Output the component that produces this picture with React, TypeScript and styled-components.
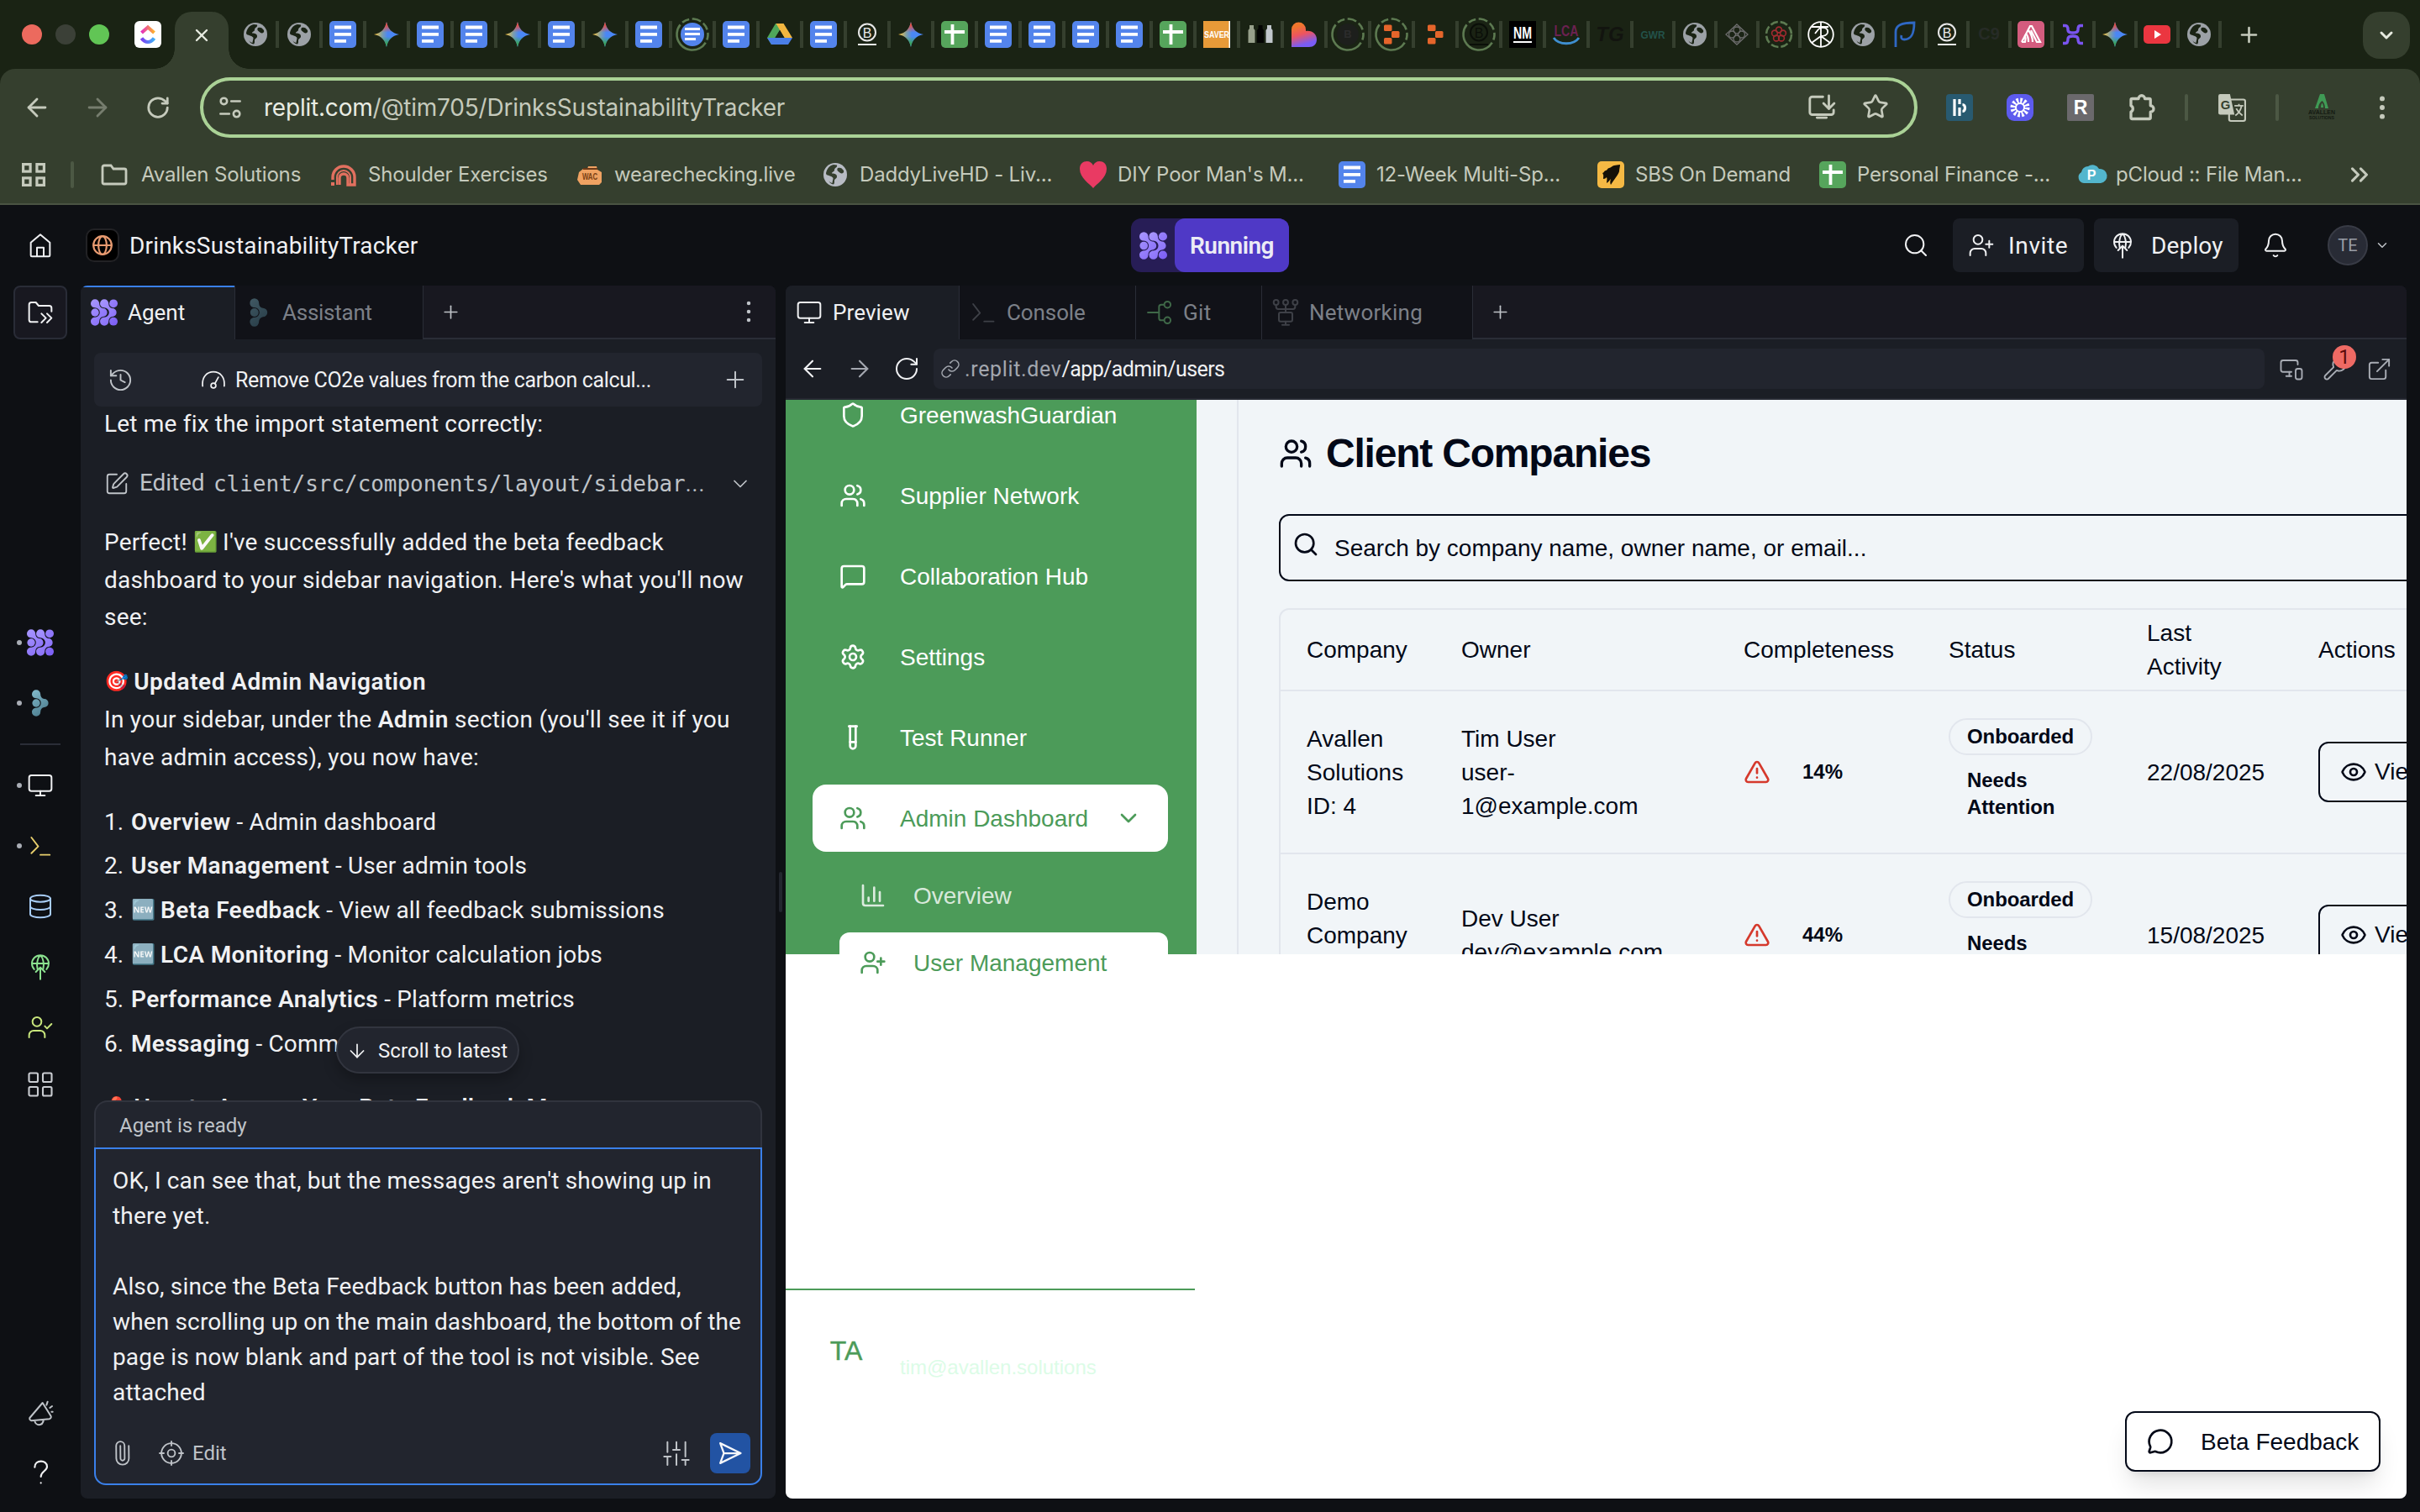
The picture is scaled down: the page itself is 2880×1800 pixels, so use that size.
import React from "react";
import styled, { createGlobalStyle, css } from "styled-components";
import {
  ArrowDown, ArrowLeft, ArrowRight, Bell, ChartColumn, ChevronDown, ChevronsRight, Database, Eye,
  ExternalLink, History, LayoutGrid, Link, MessageCircle, MessageSquare, Monitor, MonitorSmartphone,
  Paperclip, Plus, RotateCw, Search, Settings, Shield, SquarePen, Star, TestTube, TriangleAlert,
  UserCheck, UserPlus, Users, Wrench, X,
} from "lucide-react";

const c = {
  strip: "#1a2314",
  chrome: "#353f2e",
  chromeText: "#c5cabc",
  lime: "#aad296",
  root: "#0e1014",
  panel: "#1b1e25",
  tabs: "#181820",
  tabIdle: "#111218",
  card: "#22252e",
  line: "#2a2d37",
  text: "#f0f1f3",
  dim: "#bfc3c8",
  blue: "#3a80ea",
  green: "#4c9b59",
  ink: "#020817",
  page: "#f1f5f8",
  pageLine: "#e2e6ed",
};

const Global = createGlobalStyle`
  * { box-sizing: border-box; }
  body { margin: 0; background: ${c.root}; }
  svg { display: block; flex: none; overflow: visible; }
`;

const Screen = styled.div`
  width: 2880px;
  height: 1800px;
  display: flex;
  flex-direction: column;
  overflow: hidden;
  background: ${c.root};
  font-family: Roboto, "Noto Sans", sans-serif;
`;

/* ---------- browser chrome ---------- */

const TabStrip = styled.div`
  height: 82px;
  flex: none;
  display: flex;
  align-items: center;
  padding-left: 26px;
  background: ${c.strip};
`;
const Lights = styled.div`
  display: flex;
  gap: 16px;
  margin-right: 30px;
`;
const Light = styled.span<{ $tone: string }>`
  width: 24px;
  height: 24px;
  border-radius: 50%;
  background: ${(p) => p.$tone};
`;
const ActiveTab = styled.div`
  position: relative;
  width: 64px;
  height: 68px;
  margin: 14px 8px 0 16px;
  border-radius: 20px 20px 0 0;
  background: ${c.chrome};
  color: #e6eadf;
  display: flex;
  align-items: center;
  justify-content: center;
  padding-bottom: 12px;
  &::before, &::after {
    content: "";
    position: absolute;
    bottom: 0;
    width: 24px;
    height: 24px;
  }
  &::before { left: -24px; background: radial-gradient(circle at 0 0, transparent 23.5px, ${c.chrome} 24px); }
  &::after { right: -24px; background: radial-gradient(circle at 100% 0, transparent 23.5px, ${c.chrome} 24px); }
`;
const FavTab = styled.div<{ $narrow: boolean }>`
  width: ${(p) => (p.$narrow ? 50 : 52)}px;
  height: 32px;
  flex: none;
  display: flex;
  align-items: center;
  justify-content: center;
  border-right: 4px solid ${c.chrome};
  position: relative;
  z-index: 1;
`;
const NewTab = styled.div`
  margin-left: 18px;
  color: ${c.chromeText};
`;
const TabMenu = styled.div`
  width: 56px;
  height: 56px;
  margin: 2px 12px 0 auto;
  border-radius: 20px;
  background: ${c.chrome};
  color: #e6eadf;
  display: flex;
  align-items: center;
  justify-content: center;
`;
const ChromeBody = styled.div`
  flex: none;
  background: ${c.strip};
`;
const ChromePanel = styled.div`
  height: 162px;
  border-radius: 18px 18px 0 0;
  border-bottom: 2px solid #4a5443;
  background: ${c.chrome};
  color: ${c.chromeText};
`;
const Toolbar = styled.div`
  height: 92px;
  display: flex;
  align-items: center;
  padding: 0 8px;
`;
const ToolCell = styled.div<{ $dim?: boolean; $gap?: number }>`
  width: 72px;
  margin-left: ${(p) => p.$gap ?? 0}px;
  display: flex;
  justify-content: center;
  opacity: ${(p) => (p.$dim ? 0.45 : 1)};
`;
const ToolSep = styled.span`
  width: 4px;
  height: 32px;
  margin-left: 16px;
  border-radius: 2px;
  background: #4c5844;
`;
const Address = styled.div`
  width: 2044px;
  height: 72px;
  margin: 0 0 0 14px;
  padding: 0 30px 0 18px;
  border: 4px solid ${c.lime};
  border-radius: 36px;
  display: flex;
  align-items: center;
`;
const Url = styled.div`
  flex: 1;
  margin-left: 26px;
  font: 400 28px/40px Inter, sans-serif;
  letter-spacing: -0.21px;
  color: ${c.chromeText};
  b { font-weight: 400; color: #e9ece3; }
`;
const AddressIcons = styled.div`
  display: flex;
  gap: 31px;
`;
const Bookmarks = styled.div`
  height: 68px;
  display: flex;
  align-items: center;
  padding-left: 24px;
`;
const BookSep = styled.span`
  width: 4px;
  height: 32px;
  margin: 0 32px 0 28px;
  border-radius: 2px;
  background: #4c5844;
`;
const Bookmark = styled.div<{ $w: number; $gap: number }>`
  width: ${(p) => p.$w}px;
  flex: none;
  display: flex;
  align-items: center;
  gap: ${(p) => p.$gap}px;
  font: 400 24px/32px Inter, sans-serif;
  letter-spacing: -0.17px;
  white-space: nowrap;
`;

/* ---------- workspace header ---------- */

const Header = styled.header`
  height: 96px;
  flex: none;
  display: flex;
  align-items: center;
  padding-right: 36px;
  color: ${c.text};
`;
const ProjectGroup = styled.div`
  width: 1346px;
  display: flex;
  align-items: center;
  padding-left: 32px;
`;
const AppBadge = styled.div`
  width: 40px;
  height: 40px;
  margin: 0 12px 0 38px;
  border: 2px solid #222225;
  border-radius: 10px;
  background: #000;
  color: #e79a70;
  display: flex;
  align-items: center;
  justify-content: center;
`;
const ProjectName = styled.div`
  font-size: 28px;
  font-weight: 400;
  letter-spacing: 0.18px;
`;
const RunPill = styled.div`
  width: 188px;
  height: 64px;
  border-radius: 12px;
  background: #271d56;
  display: flex;
  align-items: center;
  padding-left: 10px;
  gap: 9px;
`;
const RunLabel = styled.div`
  flex: 1;
  height: 64px;
  border-radius: 12px;
  background: #4f39c6;
  font-size: 28px;
  font-weight: 600;
  letter-spacing: -0.5px;
  color: #ecebf5;
  display: flex;
  align-items: center;
  justify-content: center;
`;
const Actions = styled.div`
  flex: 1;
  display: flex;
  align-items: center;
  justify-content: flex-end;
`;
const ActionButton = styled.button<{ $w: number; $gap: number; $ml: number; $ls: number }>`
  width: ${(p) => p.$w}px;
  height: 64px;
  margin: 0 0 0 ${(p) => p.$ml}px;
  padding: 0 0 0 18px;
  border: 0;
  border-radius: 8px;
  background: ${c.panel};
  color: ${c.text};
  font: 400 28px Roboto, sans-serif;
  letter-spacing: ${(p) => p.$ls}px;
  display: flex;
  align-items: center;
  gap: ${(p) => p.$gap}px;
`;
const BellSlot = styled.div`
  margin: 0 46px 0 28px;
`;
const Avatar = styled.div`
  width: 48px;
  height: 48px;
  margin-right: 8px;
  border: 2px solid #383b45;
  border-radius: 50%;
  background: #282b35;
  color: #9a9ea7;
  font-size: 20px;
  display: flex;
  align-items: center;
  justify-content: center;
`;

/* ---------- rail ---------- */

const Workspace = styled.div`
  flex: 1;
  display: flex;
  padding: 0 16px 16px 0;
  min-height: 0;
`;
const Rail = styled.nav`
  width: 96px;
  flex: none;
  display: flex;
  flex-direction: column;
  align-items: center;
  padding-bottom: 8px;
`;
const FolderButton = styled.div`
  width: 64px;
  height: 64px;
  margin-bottom: 337px;
  border: 2px solid #292c37;
  border-radius: 8px;
  background: ${c.tabs};
  color: ${c.text};
  display: flex;
  align-items: center;
  justify-content: center;
`;
const RailItem = styled.div<{ $tone?: string; $dot?: boolean; $after?: number }>`
  position: relative;
  width: 96px;
  height: 48px;
  margin-bottom: ${(p) => p.$after ?? 24}px;
  color: ${(p) => p.$tone ?? c.text};
  display: flex;
  align-items: center;
  justify-content: center;
  ${(p) => p.$dot && css`
    &::before {
      content: "";
      position: absolute;
      left: 20px;
      top: 21px;
      width: 6px;
      height: 6px;
      border-radius: 50%;
      background: #a9adb5;
    }
  `}
`;
const RailRule = styled.hr`
  width: 48px;
  height: 2px;
  margin: 0 0 24px;
  border: 0;
  background: ${c.line};
`;
const RailFoot = styled.div`
  margin-top: auto;
  display: flex;
  flex-direction: column;
  gap: 22px;
`;

/* ---------- panes ---------- */

const Pane = styled.section<{ $w: number }>`
  width: ${(p) => p.$w}px;
  flex: none;
  display: flex;
  flex-direction: column;
  border-radius: 8px;
  overflow: hidden;
  background: ${c.panel};
`;
const Divider = styled.div`
  width: 12px;
  flex: none;
  display: flex;
  align-items: center;
  justify-content: center;
  &::after {
    content: "";
    width: 4px;
    height: 48px;
    border-radius: 2px;
    background: #23262e;
  }
`;
const PaneTabs = styled.div`
  height: 64px;
  flex: none;
  display: flex;
  background: ${c.tabs};
`;
const PaneTab = styled.div<{ $w: number; $active?: boolean; $accent?: boolean; $ls?: number }>`
  width: ${(p) => p.$w}px;
  padding-left: 12px;
  display: flex;
  align-items: center;
  gap: 12px;
  font-size: 26px;
  letter-spacing: ${(p) => p.$ls ?? 0}px;
  color: ${(p) => (p.$active ? c.text : "#7c8088")};
  background: ${(p) => (p.$active ? c.panel : c.tabIdle)};
  border-right: 1px solid ${c.line};
  box-shadow: ${(p) => (p.$accent ? `inset 0 2px 0 ${c.blue}` : "none")};
`;
const TabIcon = styled.span<{ $fade?: boolean }>`
  width: 32px;
  display: flex;
  justify-content: center;
  opacity: ${(p) => (p.$fade ? 0.42 : 1)};
`;
const TabsRest = styled.div`
  flex: 1;
  display: flex;
  align-items: center;
  justify-content: space-between;
  padding: 0 16px 0 20px;
  border-bottom: 2px solid ${c.line};
  color: ${c.dim};
`;

/* ---------- agent pane ---------- */

const AgentBody = styled.div`
  flex: 1;
  min-height: 0;
  position: relative;
  display: flex;
  flex-direction: column;
  padding: 16px 16px 16px;
`;
const ThreadBar = styled.div`
  height: 64px;
  flex: none;
  padding: 0 16px;
  border-radius: 8px;
  background: ${c.card};
  color: ${c.dim};
  display: flex;
  align-items: center;
  justify-content: space-between;
`;
const ThreadTitle = styled.div`
  display: flex;
  align-items: center;
  gap: 12px;
  margin-right: 3px;
  font-size: 25px;
  letter-spacing: -0.35px;
  color: ${c.text};
`;
const Messages = styled.div`
  height: 827px;
  flex: none;
  margin-top: -1px;
  padding: 0 12px;
  overflow: hidden;
  display: flex;
  flex-direction: column;
  gap: 32px;
  color: ${c.text};
  font-size: 28px;
  line-height: 44.8px;
  letter-spacing: 0.18px;
  white-space: nowrap;
`;
const Paragraph = styled.p<{ $ls?: number }>`
  margin: 0;
  letter-spacing: ${(p) => p.$ls ?? 0.19}px;
  b { letter-spacing: 0.5px; font-weight: 600; }
`;
const EditedRow = styled.div`
  height: 32px;
  flex: none;
  display: flex;
  align-items: center;
  color: ${c.dim};
  font-size: 28px;
`;
const EditedLabel = styled.span`
  margin: 0 0 0 12px;
  width: 88px;
  letter-spacing: -0.1px;
`;
const FilePath = styled.code`
  font: 400 26px/32px "DejaVu Sans Mono", "Liberation Mono", monospace;
  letter-spacing: -0.05px;
  margin-right: auto;
  i { font: 400 26px Roboto, sans-serif; letter-spacing: 1px; }
`;
const Steps = styled.ol`
  margin: 0;
  padding: 0 0 0 32px;
  display: flex;
  flex-direction: column;
  gap: 8px;
  letter-spacing: 0.14px;
  b { letter-spacing: 0.36px; font-weight: 600; }
`;
const Step = styled.li`
  list-style: none;
  height: 44.8px;
`;
const StepNo = styled.span`
  display: inline-block;
  width: 32px;
  margin-left: -32px;
  letter-spacing: 0;
`;
const Emoji = styled.span`
  display: inline-block;
  width: 28px;
  height: 28px;
  font: 23.5px/28px "Noto Color Emoji", sans-serif;
  letter-spacing: 0;
  vertical-align: 2px;
`;
const ScrollPill = styled.div`
  position: absolute;
  left: 304px;
  top: 818px;
  z-index: 2;
  width: 218px;
  height: 56px;
  border: 2px solid #32353f;
  border-radius: 28px;
  background: ${c.card};
  box-shadow: 0 8px 16px rgba(0, 0, 0, 0.25);
  color: ${c.text};
  font-size: 24px;
  letter-spacing: 0.08px;
  display: flex;
  align-items: center;
  padding: 1px 0 0 10px;
  gap: 12px;
`;
const Status = styled.div`
  height: 56px;
  flex: none;
  padding: 2px 28px 0;
  border: 2px solid #31343e;
  border-bottom: 0;
  border-radius: 16px 16px 0 0;
  background: ${c.card};
  color: ${c.dim};
  font-size: 24px;
  display: flex;
  align-items: center;
`;
const Composer = styled.div`
  height: 402px;
  flex: none;
  padding: 17px 12px 12px;
  border: 2px solid ${c.blue};
  border-radius: 0 0 14px 14px;
  background: ${c.card};
  display: flex;
  flex-direction: column;
  justify-content: space-between;
`;
const Draft = styled.div`
  padding-left: 8px;
  color: ${c.text};
  font-size: 28px;
  line-height: 42px;
  letter-spacing: 0.15px;
  white-space: pre;
`;
const ComposerBar = styled.div`
  height: 48px;
  display: flex;
  align-items: center;
  padding-left: 4px;
  color: ${c.dim};
  font-size: 24px;
`;
const EditMode = styled.div`
  margin: 0 auto 0 29px;
  display: flex;
  align-items: center;
  gap: 10px;
`;
const SendButton = styled.div`
  width: 48px;
  height: 48px;
  margin-left: 24px;
  border-radius: 8px;
  background: #2253a3;
  color: #f4f6fa;
  display: flex;
  align-items: center;
  justify-content: center;
`;

/* ---------- preview pane ---------- */

const PreviewBar = styled.div`
  height: 72px;
  flex: none;
  padding: 0 17px 0 16px;
  border-bottom: 2px solid #262932;
  color: ${c.text};
  display: flex;
  align-items: center;
`;
const NavIcons = styled.div`
  width: 160px;
  display: flex;
  gap: 24px;
  align-items: center;
`;
const PreviewUrl = styled.div`
  width: 1584px;
  height: 48px;
  padding-left: 8px;
  border-radius: 8px;
  background: ${c.card};
  display: flex;
  align-items: center;
  gap: 5px;
  font-size: 25px;
  letter-spacing: -0.6px;
  color: ${c.text};
`;
const Host = styled.span`
  color: #a3a7af;
  letter-spacing: 0.65px;
  margin-right: -5px;
`;
const PreviewTools = styled.div`
  flex: 1;
  display: flex;
  align-items: center;
  justify-content: flex-end;
  gap: 22px;
  color: #a9adb5;
`;
const WrenchSlot = styled.div`
  position: relative;
`;
const Count = styled.span`
  position: absolute;
  left: 12px;
  top: -13px;
  width: 28px;
  height: 28px;
  border-radius: 50%;
  background: #ee6a64;
  color: #5c0b0b;
  font-size: 24px;
  line-height: 29px;
  text-align: center;
`;
const SitePage = styled.div`
  flex: 1;
  position: relative;
  overflow: hidden;
  background: #fff;
  font-family: "Liberation Sans", Arial, sans-serif;
  font-size: 28px;
  line-height: 40px;
  color: ${c.ink};
`;
const Shell = styled.div`
  height: 660px;
  display: flex;
`;
const Side = styled.aside`
  width: 489px;
  height: 660px;
  flex: none;
  background: ${c.green};
  color: #fff;
  white-space: nowrap;
`;
const SideInner = styled.div`
  height: 1308px;
  width: 487px;
  display: flex;
  flex-direction: column;
`;
const SideNav = styled.div`
  margin-top: -22px;
  padding: 0 32px;
  display: flex;
  flex-direction: column;
  gap: 16px;
`;
const Label = styled.span`
  padding-top: 2px;
`;
const SideLink = styled.div<{ $on?: boolean }>`
  height: 80px;
  padding: 0 32px;
  border-radius: 16px;
  display: flex;
  align-items: center;
  gap: 40px;
  background: ${(p) => (p.$on ? "#fff" : "transparent")};
  color: ${(p) => (p.$on ? c.green : "#fff")};
`;
const Caret = styled.span`
  margin: 0 0 0 -8px;
`;
const SubNav = styled.div`
  margin-left: 32px;
  display: flex;
  flex-direction: column;
  gap: 8px;
`;
const SubLink = styled.div<{ $on?: boolean }>`
  height: 72px;
  padding: 0 24px;
  border-radius: 12px;
  display: flex;
  align-items: center;
  gap: 32px;
  background: ${(p) => (p.$on ? "#fff" : "transparent")};
  color: ${(p) => (p.$on ? c.green : "rgba(255,255,255,0.8)")};
`;
const Account = styled.div`
  height: 250px;
  margin-top: auto;
  padding: 32px 32px 0;
  border-top: 2px solid ${c.green};
  display: flex;
  align-items: flex-start;
  gap: 24px;
`;
const Initials = styled.div`
  width: 80px;
  height: 80px;
  border-radius: 50%;
  background: #fff;
  color: ${c.green};
  font-size: 32px;
  line-height: 80px;
  text-align: center;
  -webkit-text-stroke: 0.4px ${c.green};
`;
const Mail = styled.div`
  padding-top: 44px;
  color: #dcfce7;
  font-size: 24px;
  line-height: 32px;
`;
const Main = styled.main`
  flex: 1;
  min-width: 0;
  overflow: hidden;
  padding-left: 48px;
  background: ${c.page};
`;
const CompanyCard = styled.div`
  width: 1700px;
  height: 700px;
  border-left: 2px solid ${c.pageLine};
  padding: 32px 48px;
`;
const CardTitle = styled.h2`
  height: 64px;
  margin: 0 0 40px;
  display: flex;
  align-items: center;
  gap: 16px;
  font-size: 48px;
  font-weight: 700;
  letter-spacing: -1.2px;
`;
const SearchBox = styled.div`
  height: 80px;
  margin-bottom: 32px;
  padding-left: 14px;
  border: 2px solid ${c.ink};
  border-radius: 12px;
  display: flex;
  align-items: center;
  gap: 18px;
  svg { margin-bottom: 8px; }
`;
const Table = styled.div`
  border: 2px solid ${c.pageLine};
  border-radius: 12px;
`;
const Row = styled.div<{ $head?: boolean }>`
  height: ${(p) => (p.$head ? 97 : 194)}px;
  border-bottom: 2px solid ${c.pageLine};
  display: grid;
  grid-template-columns: 184px 336px 244px 236px 204px 1fr;
  align-items: center;
  > * { padding-left: 31px; }
`;
const Cell = styled.div<{ $plain?: boolean }>`
  padding-top: ${(p) => (p.$plain ? 0 : 1)}px;
  white-space: pre-line;
`;
const Percent = styled.div`
  display: flex;
  align-items: center;
  gap: 38px;
  font-size: 24px;
  font-weight: 700;
`;
const Badges = styled.div`
  display: flex;
  flex-direction: column;
  align-items: flex-start;
  gap: 8px;
  font-size: 24px;
  font-weight: 700;
  line-height: 32px;
  letter-spacing: -0.1px;
`;
const Badge = styled.span<{ $plain?: boolean }>`
  padding: 4px 20px;
  border: 2px solid ${(p) => (p.$plain ? "transparent" : c.pageLine)};
  border-radius: 22px;
  white-space: pre-line;
`;
const ViewButton = styled.span`
  width: 220px;
  height: 72px;
  padding-left: 24px;
  border: 2px solid ${c.ink};
  border-radius: 12px;
  display: flex;
  align-items: center;
  gap: 9px;
`;
const FeedbackButton = styled.div`
  position: absolute;
  right: 31px;
  bottom: 32px;
  width: 304px;
  height: 72px;
  padding-left: 24px;
  border: 2px solid ${c.ink};
  border-radius: 12px;
  background: #fff;
  box-shadow: 0 20px 30px -6px rgba(0, 0, 0, 0.12), 0 8px 12px -8px rgba(0, 0, 0, 0.12);
  display: flex;
  align-items: center;
  gap: 32px;
`;

/* ---------- drawings ---------- */

const Stroke = ({ d, size = 32, w = 1.5, children }: { d?: string; size?: number; w?: number; children?: React.ReactNode }) => (
  <svg width={size} height={size} viewBox="0 0 24 24" fill="none" stroke="currentColor" strokeWidth={w} strokeLinecap="round" strokeLinejoin="round">
    {d && <path d={d} />}
    {children}
  </svg>
);

/* one lobe: top and bottom drops joined by a bulb that wraps the dot beside it */
const lobe = "M0 4A3.800 3.800 0 0 1 7.600 4C7.600 6.500 9 8 11 8.300A3.700 3.700 0 0 1 11 15.700C9 16 7.600 17.500 7.600 20A3.800 3.800 0 0 1 0 20C0 18 1.500 16.300 3.800 16.300A4.300 4.300 0 0 0 3.800 7.700C1.500 7.700 0 6.200 0 4Z";

const AgentLogo = ({ size = 32 }: { size?: number }) => (
  <svg width={size} height={size} viewBox="0 0 24 24">
    <defs>
      <linearGradient id="violet" x1="0" y1="0" x2="24" y2="24" gradientUnits="userSpaceOnUse">
        <stop offset="0" stopColor="#a998ff" />
        <stop offset="1" stopColor="#7a5cf5" />
      </linearGradient>
    </defs>
    <g fill="url(#violet)">
      <path d={lobe} />
      <path d={lobe} transform="translate(8.300 0)" />
      <circle cx="3.800" cy="12" r="3.500" />
      <circle cx="20.300" cy="4" r="3.700" />
      <circle cx="20.300" cy="20" r="3.700" />
    </g>
  </svg>
);

const AssistantLogo = ({ size = 32 }: { size?: number }) => (
  <svg width={size} height={size} viewBox="0 0 24 24">
    <defs>
      <linearGradient id="teal" x1="0" y1="0" x2="18" y2="24" gradientUnits="userSpaceOnUse">
        <stop offset="0" stopColor="#84bccd" />
        <stop offset="1" stopColor="#3f6e80" />
      </linearGradient>
    </defs>
    <g fill="url(#teal)" transform="translate(4.500 0)">
      <path d={lobe} />
      <circle cx="3.800" cy="12" r="3.500" />
    </g>
  </svg>
);

const DeployIcon = ({ size = 32 }: { size?: number }) => (
  <Stroke size={size} w={1.500}>
    <path d="M6.500 14.200A7.500 7.500 0 1 1 17.500 14.200M5 9h14M9.500 14C8.300 9.500 9.500 4 12 1.600C14.500 4 15.700 9.500 14.500 14" />
    <path d="M12 23V12.500M8 16.500l4-4 4 4" />
  </Stroke>
);

const SlidersIcon = () => (
  <Stroke d="M4 2v9M1 15h6M4 15v7.500M12 2v6M9 9h6M12 13v9.500M20 2v13M17 18h6M20 18v4.500" />
);

const Dots = ({ size = 28, r = 1.7 }: { size?: number; r?: number }) => (
  <svg width={size} height={size} viewBox="0 0 24 24" fill="currentColor">
    <circle cx="12" cy="4.500" r={r} />
    <circle cx="12" cy="12" r={r} />
    <circle cx="12" cy="19.500" r={r} />
  </svg>
);

const Glyph = ({ children, size = 32 }: { children: React.ReactNode; size?: number }) => (
  <svg width={size} height={size} viewBox="0 0 32 32">{children}</svg>
);

const Word = ({ x = 16, y, size, fill, children, weight = 700, italic, len }: {
  x?: number; y: number; size: number; fill: string; children: string; weight?: number; italic?: boolean; len?: number;
}) => (
  <text x={x} y={y} fontSize={size} fill={fill} fontWeight={weight} fontStyle={italic ? "italic" : "normal"} textAnchor="middle"
    fontFamily="Liberation Sans, sans-serif" textLength={len} lengthAdjust="spacingAndGlyphs">{children}</text>
);

const Ring = () => <circle cx="16" cy="16" r="18.500" fill="none" stroke="#5d7a51" strokeWidth="2.600" strokeDasharray="9 3.500 9 3.500 9 3.500 60 3.500" transform="rotate(-85 16 16)" />;

const BCorp = ({ tone }: { tone: string }) => (
  <>
    <circle cx="16" cy="13.500" r="10" fill="none" stroke={tone} strokeWidth="2" />
    <Word y={19.500} size={16} fill={tone} weight={400}>B</Word>
    <rect x="5" y="27" width="22" height="2" fill={tone} />
  </>
);

const Favicon = ({ kind, globe = "#9ca1a6", dark = c.strip }: { kind: string; globe?: string; dark?: string }) => {
  switch (kind) {
    case "clickup":
      return (
        <Glyph>
          <defs>
            <linearGradient id="cuTop" x1="0" x2="1"><stop offset="0" stopColor="#e52fc0" /><stop offset="1" stopColor="#fdb32b" /></linearGradient>
            <linearGradient id="cuLow" x1="0" x2="1"><stop offset="0" stopColor="#7b3cf0" /><stop offset="1" stopColor="#3fb0f7" /></linearGradient>
          </defs>
          <rect width="32" height="32" rx="6" fill="#fff" />
          <path d="M8.500 14L16 7.500l7.500 6.500" fill="none" stroke="url(#cuTop)" strokeWidth="4.200" />
          <path d="M8.500 20.500c4.500 6 10.500 6 15 0" fill="none" stroke="url(#cuLow)" strokeWidth="4.200" />
        </Glyph>
      );
    case "globe":
      return (
        <Glyph>
          <circle cx="16" cy="16" r="14" fill={globe} />
          <path d="M5 14c1-5 4-9 9-10l4 .5c1 3-3 3-3 6 0 2-3 2-3 4 4 0 6 1 6 4 0 2-3 2-3 5 0 2 0 3-1 4-4 0-6-4-6-7 0-3-2-3-3-6z" fill={dark} />
          <path d="M19 8c3-1 5 0 7 3 1 3-2 4-4 3-2-2-5-3-3-6z" fill={dark} />
          <path d="M5.500 16c3 1 7 2 8 4 0 2-1 4-1 6-4-1-7-5-7-10z" fill={globe} />
        </Glyph>
      );
    case "docs":
      return <Glyph><rect width="32" height="32" rx="5" fill="#5384ec" /><path d="M6 7.500h20M6 15.800h20M6 23.800h14" stroke="#fff" strokeWidth="3.800" /></Glyph>;
    case "docsRing":
      return <Glyph><Ring /><circle cx="16" cy="16" r="14" fill="#5384ec" /><path d="M7 9.500h18M7 15.500h18M7 21.500h13" stroke="#fff" strokeWidth="3.200" /></Glyph>;
    case "sheets":
      return <Glyph><rect width="32" height="32" rx="5" fill="#56a55c" /><path d="M13.500 4v24M4 13h24" stroke="#fff" strokeWidth="3.800" /></Glyph>;
    case "gemini":
      return (
        <Glyph>
          <defs>
            <linearGradient id="gemA" x1="0" x2="0.9" y1="0.5" y2="0.55"><stop offset="0.05" stopColor="#f5c242" /><stop offset="0.35" stopColor="#7f9fa5" /><stop offset="0.600" stopColor="#4a87f5" /></linearGradient>
            <linearGradient id="gemB" x1="0.5" x2="0.5" y1="0" y2="1"><stop offset="0.12" stopColor="#ee4b3c" /><stop offset="0.42" stopColor="#ee4b3c" stopOpacity="0" /><stop offset="0.580" stopColor="#3aa757" stopOpacity="0" /><stop offset="0.86" stopColor="#3aa757" /></linearGradient>
          </defs>
          <path d="M16 1C17.500 9.500 22.500 14.500 31 16C22.500 17.500 17.500 22.500 16 31C14.500 22.500 9.500 17.500 1 16C9.500 14.500 14.500 9.500 16 1Z" fill="url(#gemA)" />
          <path d="M16 1C17.500 9.500 22.500 14.500 31 16C22.500 17.500 17.500 22.500 16 31C14.500 22.500 9.500 17.500 1 16C9.500 14.500 14.500 9.500 16 1Z" fill="url(#gemB)" />
        </Glyph>
      );
    case "drive":
      return <Glyph><path d="M11 3h10L11 19 6 28 1 20z" fill="#4fa75a" /><path d="M11.500 3h9L31 20H21.500z" fill="#f2b640" /><path d="M1 20h30l-5 8H6z" fill="#4a7fe8" /><path d="M16 11l5.500 9h-11z" fill={c.strip} /></Glyph>;
    case "b":
      return <Glyph><BCorp tone="#e8e8e8" /></Glyph>;
    case "bRing":
      return <Glyph><Ring /><BCorp tone="#0b0f09" /></Glyph>;
    case "bDark":
      return <Glyph><Ring /><circle cx="16" cy="16" r="13" fill="#1d1f1c" /><Word y={20} size={13} fill="#2c2c2c">B</Word></Glyph>;
    case "saver":
      return <Glyph><rect width="32" height="32" fill="#e79a38" /><rect x="30.500" width="1.500" height="32" fill="#fff" /><Word y={19.500} size={10} fill="#fff" len={30}>SAVER</Word></Glyph>;
    case "bottles":
      return <Glyph><path d="M3 5h5v4l1.500 2v15h-8V11L3 9z" fill="#97a08b" /><path d="M13.500 5h5v4l1.500 2v15h-8V11l1.500-2z" fill="#030403" /><path d="M24 5h5v4l1.500 2v15h-8V11L24 9z" fill="#c1c7cc" /></Glyph>;
    case "lovable":
      return (
        <Glyph>
          <defs><linearGradient id="lov" x1="0.200" y1="0" x2="0.500" y2="1"><stop offset="0.150" stopColor="#f0762d" /><stop offset="0.500" stopColor="#ee5460" /><stop offset="0.9" stopColor="#7a5cf5" /></linearGradient></defs>
          <path d="M1 10a8.500 8.500 0 0 1 17 0v2c8-1 13 4 13 10s-4 9-9 9H1z" fill="url(#lov)" />
        </Glyph>
      );
    case "replit":
    case "replitRing":
      return (
        <Glyph>
          {kind === "replitRing" && <Ring />}
          <rect x="7" y="4.500" width="9.500" height="7.500" rx="1.500" fill="#e5652b" />
          <rect x="16" y="12" width="9.500" height="8" rx="1.500" fill="#e5652b" />
          <rect x="7" y="20" width="9.500" height="7.500" rx="1.500" fill="#e5652b" />
        </Glyph>
      );
    case "nm":
      return <Glyph><rect width="32" height="32" fill="#000" /><Word y={21} size={20} fill="#fff" len={22}>NM</Word><path d="M5 25h22" stroke="#fff" strokeWidth="2" /></Glyph>;
    case "lca":
      return <Glyph><Word y={18} size={19} fill="#6b2150" len={29}>LCA</Word><path d="M1 20c6 9 24 9 30 0" fill="none" stroke="#3f8fd0" strokeWidth="2.800" /></Glyph>;
    case "tg":
      return <Glyph><Word y={24} size={24} fill="#12140f" italic>TG</Word></Glyph>;
    case "gwr":
      return <Glyph><Word y={21} size={13} fill="#23524a" len={29}>GWR</Word></Glyph>;
    case "knot":
      return <Glyph><g fill="none" stroke="#6d6d6d" strokeWidth="1.300"><path d="M16 4l13 12-13 12L3 16z" /><circle cx="16" cy="11" r="4" /><circle cx="16" cy="21" r="4" /><circle cx="10.500" cy="16" r="4" /><circle cx="21.500" cy="16" r="4" /></g></Glyph>;
    case "rose":
      return <Glyph><circle cx="16" cy="16" r="15" fill="none" stroke="#5d7a51" strokeWidth="2.600" strokeDasharray="9 3" /><g fill="none" stroke="#a02a30" strokeWidth="1.600"><circle cx="16" cy="10.500" r="3.400" /><circle cx="11" cy="14.500" r="3.400" /><circle cx="21" cy="14.500" r="3.400" /><circle cx="13" cy="20.500" r="3.400" /><circle cx="19" cy="20.500" r="3.400" /></g></Glyph>;
    case "tree":
      return <Glyph><g fill="none" stroke="#fff" strokeWidth="1.800"><circle cx="16" cy="16" r="14.800" /><path d="M16 1v30M5 7h20M16 18L5 26M16 18l11 8M9 15c3-4 4-6 7-7 6-1 9 2 8 6-1 3-4 4-8 4" /></g></Glyph>;
    case "leaf":
      return <Glyph><path d="M5 31V13C5 5 12 2 27 2c0 13-3 20-12 20-3 0-4-2-3-5" fill="none" stroke="#2f68c4" strokeWidth="2.800" /></Glyph>;
    case "c9":
      return <Glyph><Word y={22} size={20} fill="#262b26">C9</Word></Glyph>;
    case "sail":
      return <Glyph><rect width="32" height="32" rx="5" fill="#d35c7e" /><path d="M5 25L15 6l2 0 10 19h-4l-7-14M5 25h4c2-6-1-7 0-8M13 25c0-5-1-8-3-10M18 25c0-6-2-10-5-14" fill="none" stroke="#fff" strokeWidth="2.200" /></Glyph>;
    case "x":
      return <Glyph><path d="M4 5.500h3c3 0 3 3 3 5 0 3 3 3.500 6 3.500s6-.5 6-3.500c0-2 0-5 3-5h3M4 26.500h3c3 0 3-3 3-5 0-3 3-3.500 6-3.500s6 .5 6 3.500c0 2 0 5 3 5h3" fill="none" stroke="#7a54f0" strokeWidth="3.400" /></Glyph>;
    case "youtube":
      return <Glyph><rect y="5" width="32" height="22" rx="5" fill="#eb3640" /><path d="M13 11v10l8-5z" fill="#fff" /></Glyph>;
    case "folder":
      return <Glyph><path d="M2 7a2 2 0 0 1 2-2h8l3 4h13a2 2 0 0 1 2 2v14a2 2 0 0 1-2 2H4a2 2 0 0 1-2-2z" fill="none" stroke={c.chromeText} strokeWidth="2.800" /></Glyph>;
    case "arch":
      return <Glyph><g fill="none" stroke="#e2705f" strokeWidth="3.400"><path d="M3 22v-3a13 13 0 0 1 26 0v9h-8v-8a5 5 0 0 0-10 0v8" /><path d="M8 28v-9a8 8 0 0 1 16 0v9" strokeWidth="2" /></g><rect x="1" y="25" width="4" height="4" fill="#e2705f" /></Glyph>;
    case "wac":
      return <Glyph><path d="M8 9h5l1-3h10l1 4 5 3v12l-3 3H5l-4-6 2-9z" fill="#efa262" /><path d="M8 9h17" stroke="#6b3a18" strokeWidth="2" /><Word y={22} size={10} fill="#7b4013" len={18}>WAC</Word></Glyph>;
    case "heart":
      return <Glyph><path d="M16 32C12 27 0 20 0 9C0 3 4 0 8.500 0C12 0 15 2 16 5C17 2 20 0 23.500 0C28 0 32 3 32 9C32 20 20 27 16 32Z" fill="#e93a63" /></Glyph>;
    case "sbs":
      return <Glyph><rect width="32" height="32" rx="5" fill="#f5b944" /><path d="M6 14c2 0 2-3 4-3s2-3 4-3 4-3 6-3 4-1 7-1c0 3-1 5-1 8-1 4-5 8-10 16-1-2-1-4 0-7-2 2-3 4-5 5 0-3 1-5 0-7-1 1-2 2-4 2 0-3 1-4-1-7z" fill="#141008" /></Glyph>;
    case "pcloud":
      return <Glyph><path d="M7 26a7 7 0 0 1-3-13 8 8 0 0 1 8-7 9 9 0 0 1 13 3 8 8 0 0 1 2 17z" fill="#53b6cd" /><Word y={22} size={16} fill="#fff">P</Word></Glyph>;
    default:
      return null;
  }
};

const tabs = (
  "globe globe docs gemini docs docs gemini docs gemini docs docsRing docs drive docs b gemini sheets docs docs docs docs sheets " +
  "saver bottles lovable bDark replitRing replit bRing nm lca tg gwr globe knot rose tree globe leaf b c9 sail x gemini youtube globe"
).split(" ");

const bookmarks: [string, string, number][] = [
  ["folder", "Avallen Solutions", 273],
  ["arch", "Shoulder Exercises", 293],
  ["wac", "wearechecking.live", 292],
  ["globe", "DaddyLiveHD - Liv...", 307],
  ["heart", "DIY Poor Man's M...", 308],
  ["docs", "12-Week Multi-Sp...", 308],
  ["sbs", "SBS On Demand", 264],
  ["sheets", "Personal Finance -...", 308],
  ["pcloud", "pCloud :: File Man...", 318],
];

const Browser = () => (
  <>
    <TabStrip>
      <Lights>
        <Light $tone="#ec6a5e" />
        <Light $tone="#3b4037" />
        <Light $tone="#61c555" />
      </Lights>
      <Favicon kind="clickup" />
      <ActiveTab><X size={24} strokeWidth={2.4} /></ActiveTab>
      {tabs.map((t, i) => (
        <FavTab key={i} $narrow={i > 31}><Favicon kind={t} /></FavTab>
      ))}
      <NewTab><Plus size={29} strokeWidth={2.2} /></NewTab>
      <TabMenu><ChevronDown size={24} strokeWidth={3} /></TabMenu>
    </TabStrip>
    <ChromeBody>
      <ChromePanel>
        <Toolbar>
          <ToolCell><ArrowLeft size={34} strokeWidth={2} /></ToolCell>
          <ToolCell $dim><ArrowRight size={34} strokeWidth={2} /></ToolCell>
          <ToolCell><RotateCw size={30} strokeWidth={2.2} /></ToolCell>
          <Address>
            <Stroke size={28} w={2.2}>
              <circle cx="5.500" cy="5.500" r="3.200" /><path d="M13 5.500h9M2 18.500h9" /><circle cx="18.500" cy="18.500" r="3.200" />
            </Stroke>
            <Url><b>replit.com</b>/@tim705/DrinksSustainabilityTracker</Url>
            <AddressIcons>
              <Stroke size={34} w={2}><path d="M13 3H4a2 2 0 0 0-2 2v11a2 2 0 0 0 2 2h16a2 2 0 0 0 2-2v-2M8 20.500h8M18 2v10M13.500 8.500L18 13l4.500-4.500" /></Stroke>
              <Star size={32} strokeWidth={2} />
            </AddressIcons>
          </Address>
          <ToolCell $gap={14}>
            <Glyph><rect width="32" height="32" rx="4" fill="#285a70" /><path d="M10 6v20M16 6v6M16 16v10M19.500 12.500c4 0 4 8 0 8" stroke="#fff" strokeWidth="3.200" fill="none" /></Glyph>
          </ToolCell>
          <ToolCell>
            <Glyph><rect width="32" height="32" rx="9" fill="#5d5bee" /><circle cx="16" cy="16" r="8" fill="none" stroke="#fff" strokeWidth="7" strokeDasharray="2.300 1.889" /><circle cx="16" cy="16" r="5" fill="none" stroke="#fff" strokeWidth="2" /></Glyph>
          </ToolCell>
          <ToolCell><Glyph><rect width="32" height="32" rx="2" fill="#6b696c" /><Word y={24} size={23} fill="#fff">R</Word></Glyph></ToolCell>
          <ToolCell>
            <Stroke size={36} w={2.2} d="M5 5h5a2.500 2.500 0 0 1 5 0h3.500a1 1 0 0 1 1 1v4.500a2.500 2.500 0 0 1 0 5V20a1 1 0 0 1-1 1H5a1 1 0 0 1-1-1v-4.500a2.800 2.800 0 0 0 0-5V6a1 1 0 0 1 1-1z" />
          </ToolCell>
          <ToolSep />
          <ToolCell $gap={16}>
            <Glyph size={34}>
              <rect x="13" y="7" width="18" height="24" rx="2" fill="none" stroke={c.chromeText} strokeWidth="2" />
              <path d="M3 1h11l5 23H3a2 2 0 0 1-2-2V3a2 2 0 0 1 2-2z" fill={c.chromeText} />
              <Word x={9} y={18} size={14} fill={c.chrome}>G</Word>
              <path d="M19 14h10M24 12v2M27 14c-1 5-4 9-7 11M21 17c2 4 4 6 7 8" fill="none" stroke={c.chromeText} strokeWidth="1.800" />
            </Glyph>
          </ToolCell>
          <ToolSep />
          <ToolCell $gap={15}>
            <Glyph><path d="M8 17L14 0h5l5 17h-4c0-5-2-8-3.500-9C15 9 12 12 12 17z" fill="#3f9a55" /><path d="M15 16c0-3 1-5 1.500-5s1.500 2 1.500 5z" fill="#3f9a55" /><Word y={24} size={8} fill="#141a12" len={32}>AVALLEN</Word><Word y={30} size={5} fill="#141a12" len={30}>SOLUTIONS</Word></Glyph>
          </ToolCell>
          <ToolCell><Dots size={34} r={2.1} /></ToolCell>
        </Toolbar>
        <Bookmarks>
          <Glyph><g fill="none" stroke={c.chromeText} strokeWidth="3.200"><rect x="3.600" y="3.600" width="8.500" height="8.500" /><rect x="19.900" y="3.600" width="8.500" height="8.500" /><rect x="3.600" y="19.900" width="8.500" height="8.500" /><rect x="19.900" y="19.900" width="8.500" height="8.500" /></g></Glyph>
          <BookSep />
          {bookmarks.map(([icon, label, w]) => (
            <Bookmark key={label} $w={w} $gap={icon === "folder" ? 16 : 13}>
              <Favicon kind={icon} globe="#b8bcc4" dark={c.chrome} />
              {label}
            </Bookmark>
          ))}
          <ChevronsRight size={34} strokeWidth={2.200} />
        </Bookmarks>
      </ChromePanel>
    </ChromeBody>
  </>
);

const WorkspaceHeader = () => (
  <Header>
    <ProjectGroup>
      <Stroke d="M3.500 9.500L12 2.500l8.500 7V21a1 1 0 0 1-1 1h-15a1 1 0 0 1-1-1zM9 22v-8h6v8" />
      <AppBadge>
        <Stroke size={26} w={2}><circle cx="12" cy="12" r="10" /><ellipse cx="12" cy="12" rx="4.500" ry="10" /><path d="M2 12h20" /></Stroke>
      </AppBadge>
      <ProjectName>DrinksSustainabilityTracker</ProjectName>
    </ProjectGroup>
    <RunPill>
      <AgentLogo size={33} />
      <RunLabel>Running</RunLabel>
    </RunPill>
    <Actions>
      <Search size={32} strokeWidth={1.500} />
      <ActionButton $w={156} $gap={16} $ml={28} $ls={0.65}><UserPlus size={32} strokeWidth={1.500} />Invite</ActionButton>
      <ActionButton $w={172} $gap={18} $ml={12} $ls={0.15}><DeployIcon />Deploy</ActionButton>
      <BellSlot><Bell size={32} strokeWidth={1.500} /></BellSlot>
      <Avatar>TE</Avatar>
      <ChevronDown size={18} strokeWidth={2} color={c.dim} />
    </Actions>
  </Header>
);

const SideRail = () => (
  <Rail>
    <FolderButton>
      <Stroke d="M9.500 20.500H4a2 2 0 0 1-2-2V5a2 2 0 0 1 2-2h4l2.500 3H20a2 2 0 0 1 2 2v3M13 13l4 4-4 4M18 13l4 4-4 4" w={1.500} />
    </FolderButton>
    <RailItem $dot><AgentLogo /></RailItem>
    <RailItem $dot><AssistantLogo /></RailItem>
    <RailRule />
    <RailItem $dot><Monitor size={32} strokeWidth={1.500} /></RailItem>
    <RailItem $dot $tone="#e8cf6d"><Stroke size={30} d="M3.500 4l6.500 8.500L3.500 19M12 20.500h9" /></RailItem>
    <RailItem $tone="#a8cdf7"><Database size={32} strokeWidth={1.500} /></RailItem>
    <RailItem $tone="#8be28f"><DeployIcon /></RailItem>
    <RailItem $tone="#c8e67c" $after={20}><UserCheck size={32} strokeWidth={1.500} /></RailItem>
    <RailItem $tone="#c9ccd1" $after={0}><LayoutGrid size={36} strokeWidth={1.400} /></RailItem>
    <RailFoot>
      <RailItem $tone={c.dim} $after={0}>
        <Stroke d="M14 3L2.500 16.500a2 2 0 0 0 1.500 2.500l16-1.500a2 2 0 0 0 1.500-2.500zM7 19c.5 4.500 7 5.500 8-1M18.500 2l-1 3M22.500 6l-2 1.500M23 11h-1" />
      </RailItem>
      <RailItem $after={0}><Stroke d="M7 8c0-7 11-7 11-.5 0 4-5.500 4-5.500 9M12.500 22v.1" w={1.600} /></RailItem>
    </RailFoot>
  </Rail>
);

const AgentPane = () => (
  <Pane $w={827}>
    <PaneTabs>
      <PaneTab $w={184} $active $accent $ls={0}><TabIcon><AgentLogo /></TabIcon>Agent</PaneTab>
      <PaneTab $w={224} $ls={-0.25}><TabIcon $fade><AssistantLogo size={34} /></TabIcon>Assistant</PaneTab>
      <TabsRest><Plus size={25} strokeWidth={1.600} /><Dots size={32} r={1.700} /></TabsRest>
    </PaneTabs>
    <AgentBody>
      <ThreadBar>
        <History size={31} strokeWidth={1.500} />
        <ThreadTitle>
          <Stroke size={28}><path d="M1 18.500C0 9 5.500 4 12 4s12 5 11 14.500" /><circle cx="12" cy="18" r="2.500" /><path d="M13.500 16L17 9.500" /></Stroke>
          Remove CO2e values from the carbon calcul...
        </ThreadTitle>
        <Plus size={32} strokeWidth={1.500} />
      </ThreadBar>
      <Messages>
        <Paragraph>Let me fix the import statement correctly:</Paragraph>
        <EditedRow>
          <SquarePen size={30} strokeWidth={1.500} />
          <EditedLabel>Edited</EditedLabel>
          <FilePath>client/src/components/layout/sidebar<i>...</i></FilePath>
          <ChevronDown size={28} strokeWidth={1.500} />
        </EditedRow>
        <Paragraph>
          Perfect! <Emoji>✅</Emoji> I've successfully added the beta feedback<br />
          dashboard to your sidebar navigation. Here's what you'll now<br />
          see:
        </Paragraph>
        <Paragraph $ls={0.27}>
          <Emoji>🎯</Emoji> <b>Updated Admin Navigation</b><br />
          In your sidebar, under the <b>Admin</b> section (you'll see it if you<br />
          have admin access), you now have:
        </Paragraph>
        <Steps>
          <Step><StepNo>1.</StepNo><b>Overview</b> - Admin dashboard</Step>
          <Step><StepNo>2.</StepNo><b>User Management</b> - User admin tools</Step>
          <Step><StepNo>3.</StepNo><Emoji>🆕</Emoji> <b>Beta Feedback</b> - View all feedback submissions</Step>
          <Step><StepNo>4.</StepNo><Emoji>🆕</Emoji> <b>LCA Monitoring</b> - Monitor calculation jobs</Step>
          <Step><StepNo>5.</StepNo><b>Performance Analytics</b> - Platform metrics</Step>
          <Step><StepNo>6.</StepNo><b>Messaging</b> - Commu</Step>
        </Steps>
        <Paragraph><Emoji>📍</Emoji> <b>How to Access Your Beta Feedback Messages:</b></Paragraph>
      </Messages>
      <ScrollPill><ArrowDown size={26} strokeWidth={1.600} />Scroll to latest</ScrollPill>
      <Status>Agent is ready</Status>
      <Composer>
        <Draft>{"OK, I can see that, but the messages aren't showing up in\nthere yet.\n\nAlso, since the Beta Feedback button has been added,\nwhen scrolling up on the main dashboard, the bottom of the\npage is now blank and part of the tool is not visible. See\nattached"}</Draft>
        <ComposerBar>
          <Paperclip size={30} strokeWidth={1.500} transform="rotate(-45)" />
          <EditMode>
            <Stroke size={30}><circle cx="12" cy="12" r="9.500" /><circle cx="12" cy="12" r="3.500" /><path d="M12 .8v4M12 19.200v4M.8 12h4M19.200 12h4" /></Stroke>
            Edit
          </EditMode>
          <SlidersIcon />
          <SendButton><Stroke size={30} w={1.800} d="M2.500 2.500L22 12 2.500 21.500 6 12zM6 12h16" /></SendButton>
        </ComposerBar>
      </Composer>
    </AgentBody>
  </Pane>
);

const sideLinks: [React.ElementType, string][] = [
  [Shield, "GreenwashGuardian"],
  [Users, "Supplier Network"],
  [MessageSquare, "Collaboration Hub"],
  [Settings, "Settings"],
  [TestTube, "Test Runner"],
];

const companies = [
  { name: "Avallen\nSolutions\nID: 4", owner: "Tim User\nuser-\n1@example.com", pct: "14%", date: "22/08/2025" },
  { name: "Demo\nCompany\nID: 1", owner: "Dev User\ndev@example.com", pct: "44%", date: "15/08/2025" },
];

const SitePreview = () => (
  <SitePage>
    <Shell>
      <Side>
        <SideInner>
          <SideNav>
            {sideLinks.map(([Icon, label]) => (
              <SideLink key={label}><Icon size={32} strokeWidth={2} /><Label>{label}</Label></SideLink>
            ))}
            <SideLink $on>
              <Users size={32} /><Label>Admin Dashboard</Label><Caret><ChevronDown size={32} /></Caret>
            </SideLink>
            <SubNav>
              <SubLink><ChartColumn size={32} /><Label>Overview</Label></SubLink>
              <SubLink $on><UserPlus size={32} /><Label>User Management</Label></SubLink>
            </SubNav>
          </SideNav>
          <Account>
            <Initials>TA</Initials>
            <Mail>tim@avallen.solutions</Mail>
          </Account>
        </SideInner>
      </Side>
      <Main>
        <CompanyCard>
          <CardTitle><Users size={40} strokeWidth={2} />Client Companies</CardTitle>
          <SearchBox><Search size={32} /><Label>Search by company name, owner name, or email...</Label></SearchBox>
          <Table>
            <Row $head>
              <Cell>Company</Cell><Cell>Owner</Cell><Cell>Completeness</Cell><Cell>Status</Cell><Cell>{"Last\nActivity"}</Cell><Cell>Actions</Cell>
            </Row>
            {companies.map((co) => (
              <Row key={co.name}>
                <Cell>{co.name}</Cell>
                <Cell>{co.owner}</Cell>
                <Percent><TriangleAlert size={32} color="#d5392c" />{co.pct}</Percent>
                <Badges><Badge>Onboarded</Badge><Badge $plain>{"Needs\nAttention"}</Badge></Badges>
                <Cell>{co.date}</Cell>
                <Cell $plain><ViewButton><Eye size={32} />View</ViewButton></Cell>
              </Row>
            ))}
          </Table>
        </CompanyCard>
      </Main>
    </Shell>
    <FeedbackButton><MessageCircle size={32} /><Label>Beta Feedback</Label></FeedbackButton>
  </SitePage>
);

const PreviewPane = () => (
  <Pane $w={1929}>
    <PaneTabs>
      <PaneTab $w={207} $active $ls={0.1}><TabIcon><Monitor size={32} strokeWidth={1.500} /></TabIcon>Preview</PaneTab>
      <PaneTab $w={210} $ls={-0.1}><TabIcon $fade><Stroke size={30} d="M2.500 4L9 12.500 2.500 19M13 20.500h9" /></TabIcon>Console</PaneTab>
      <PaneTab $w={150} $ls={0.3}>
        <TabIcon $fade>
          <svg width="32" height="32" viewBox="0 0 24 24" fill="none" stroke="#7fe08a" strokeWidth="1.500">
            <circle cx="19" cy="5" r="2.800" /><circle cx="19" cy="19" r="2.800" /><path d="M16 5h-2.500a2 2 0 0 0-2 2v10a2 2 0 0 0 2 2H16M11.500 12H1" />
          </svg>
        </TabIcon>
        Git
      </PaneTab>
      <PaneTab $w={251} $ls={0.25}>
        <TabIcon $fade>
          <Stroke size={32}>
            <circle cx="3.500" cy="3" r="2.200" /><circle cx="12" cy="3" r="2.200" /><circle cx="20.500" cy="3" r="2.200" />
            <path d="M3.500 5.500v1.500a2 2 0 0 0 2 2h13a2 2 0 0 0 2-2V5.500M12 5.500V12M9 23h6M12 20v3" /><rect x="6" y="12" width="12" height="8" rx="1.500" />
          </Stroke>
        </TabIcon>
        Networking
      </PaneTab>
      <TabsRest><Plus size={25} strokeWidth={1.600} /></TabsRest>
    </PaneTabs>
    <PreviewBar>
      <NavIcons>
        <ArrowLeft size={32} strokeWidth={1.600} />
        <ArrowRight size={32} strokeWidth={1.600} color="#a3a7af" />
        <RotateCw size={32} strokeWidth={1.500} />
      </NavIcons>
      <PreviewUrl>
        <Link size={24} strokeWidth={1.600} color="#a3a7af" />
        <Host>.replit.dev</Host>
        <span>/app/admin/users</span>
      </PreviewUrl>
      <PreviewTools>
        <MonitorSmartphone size={30} strokeWidth={1.500} />
        <WrenchSlot><Wrench size={30} strokeWidth={1.500} /><Count>1</Count></WrenchSlot>
        <ExternalLink size={31} strokeWidth={1.500} />
      </PreviewTools>
    </PreviewBar>
    <SitePreview />
  </Pane>
);

export default function App() {
  return (
    <>
      <Global />
      <Screen>
        <Browser />
        <WorkspaceHeader />
        <Workspace>
          <SideRail />
          <AgentPane />
          <Divider />
          <PreviewPane />
        </Workspace>
      </Screen>
    </>
  );
}
